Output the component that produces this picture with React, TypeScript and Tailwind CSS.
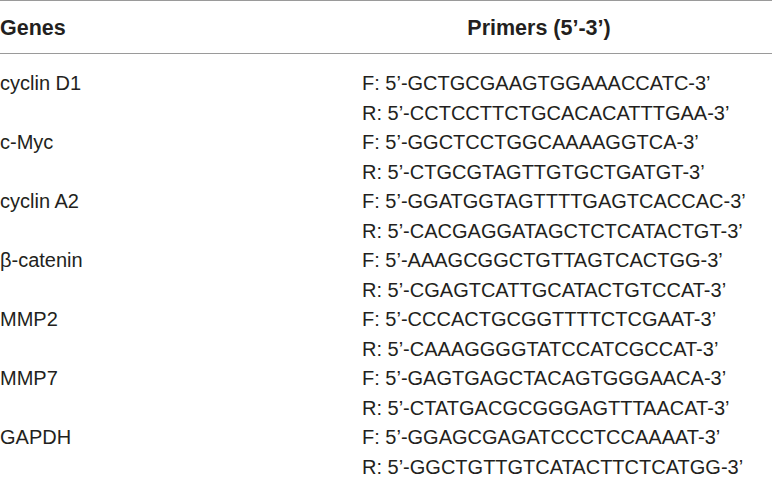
const rows: { gene: string; f: string; r: string }[] = [
  { gene: 'cyclin D1', f: 'GCTGCGAAGTGGAAACCATC', r: 'CCTCCTTCTGCACACATTTGAA' },
  { gene: 'c-Myc', f: 'GGCTCCTGGCAAAAGGTCA', r: 'CTGCGTAGTTGTGCTGATGT' },
  { gene: 'cyclin A2', f: 'GGATGGTAGTTTTGAGTCACCAC', r: 'CACGAGGATAGCTCTCATACTGT' },
  { gene: 'β-catenin', f: 'AAAGCGGCTGTTAGTCACTGG', r: 'CGAGTCATTGCATACTGTCCAT' },
  { gene: 'MMP2', f: 'CCCACTGCGGTTTTCTCGAAT', r: 'CAAAGGGGTATCCATCGCCAT' },
  { gene: 'MMP7', f: 'GAGTGAGCTACAGTGGGAACA', r: 'CTATGACGCGGGAGTTTAACAT' },
  { gene: 'GAPDH', f: 'GGAGCGAGATCCCTCCAAAAT', r: 'GGCTGTTGTCATACTTCTCATGG' },
]

export default function App() {
  return (
    <div className="w-[772px] h-[482px] bg-white overflow-hidden text-[#231f20] font-['Liberation_Sans',Arial,sans-serif] text-[20px]">
      <div className="border-t border-b border-[#9a9a9a] flex h-[54px] items-center pt-[3px] font-bold text-[21.5px]">
        <div className="w-[362px]">Genes</div>
        <div className="w-[354px] text-center">Primers (5’-3’)</div>
      </div>
      <div className="pt-[15px]">
        {rows.map((row) => (
          <div key={row.gene} className="flex leading-[29.5px]">
            <div className="w-[362px]">{row.gene}</div>
            <div className="flex flex-col">
              <span>F: 5’-{row.f}-3’</span>
              <span>R: 5’-{row.r}-3’</span>
            </div>
          </div>
        ))}
      </div>
    </div>
  )
}
